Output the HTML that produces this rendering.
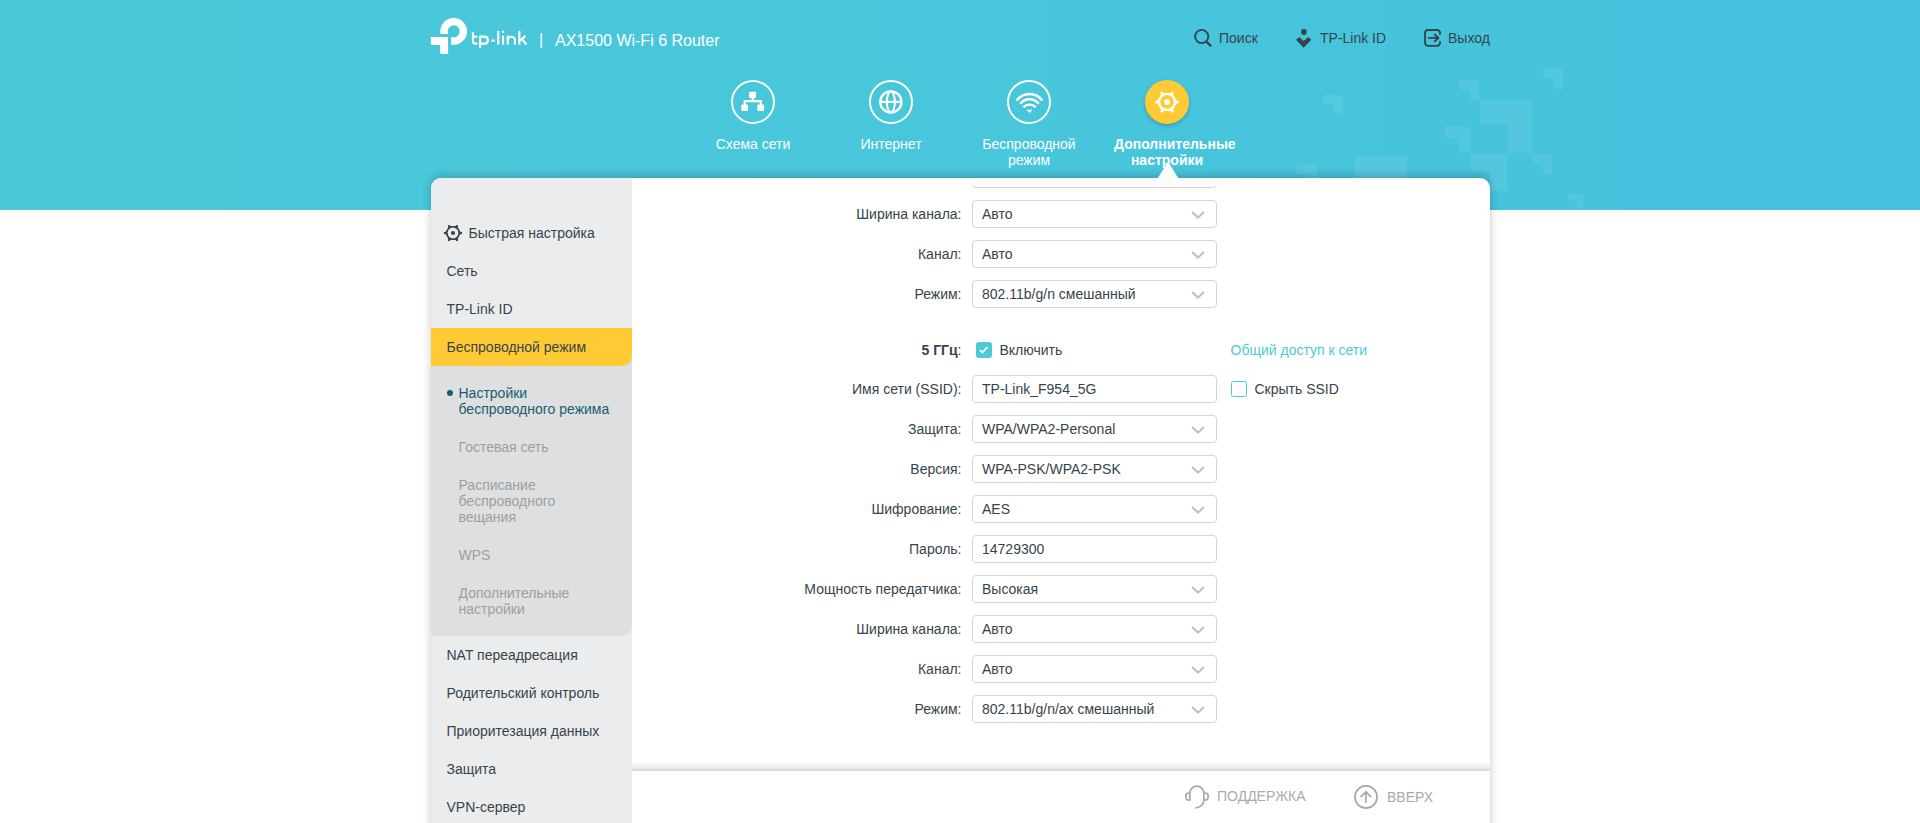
<!DOCTYPE html>
<html lang="ru">
<head>
<meta charset="utf-8">
<title>AX1500 Wi-Fi 6 Router</title>
<style>
*{box-sizing:border-box;margin:0;padding:0}
html,body{width:1920px;height:823px;overflow:hidden;background:#fff}
body{font-family:"Liberation Sans",sans-serif;font-size:14px;color:#36444b;position:relative}
.abs{position:absolute}
#hdr{position:absolute;left:0;top:0;width:1920px;height:210px;background:linear-gradient(90deg,#4ac9d8 0%,#48c6db 50%,#44c1de 100%);overflow:hidden}
.deco{position:absolute;background:rgba(255,255,255,.09)}
#title{position:absolute;left:555px;top:32px;font-size:16px;line-height:18px;color:#fff;white-space:nowrap}
#sep{position:absolute;left:539px;top:31px;font-size:16px;line-height:18px;color:#fff}
.tr{position:absolute;top:30px;line-height:16px;font-size:14px;color:#36444b;white-space:nowrap}
.nav{position:absolute;top:136px;width:138px;text-align:center;color:#fff;font-size:14px;line-height:16px}
.nav.sel{font-weight:bold}
.circ{position:absolute;top:80px;width:44px;height:44px;border-radius:50%;border:2px solid #fff}
.circ.sel{border:none;background:#ffcb34;box-shadow:0 2px 4px rgba(0,0,0,.2)}
#main{position:absolute;left:431px;top:178px;width:1059px;height:700px;background:#fff;border-radius:10px 10px 0 0;box-shadow:0 -2px 10px rgba(0,0,0,.22);overflow:hidden}
#side{position:absolute;left:0;top:0;width:201px;height:700px;background:#ebecee}
.mi{position:absolute;left:15.5px;line-height:16px;font-size:14px;color:#36444b;white-space:nowrap}
#selbar{position:absolute;left:0;top:150px;width:201px;height:38px;background:#ffcb34;border-radius:0 0 10px 0;z-index:2}
#sub{position:absolute;left:0;top:150px;width:201px;height:308px;background:#dedfe1;border-radius:0 0 10px 0}
.si{position:absolute;left:27.5px;line-height:16px;font-size:14px;color:#9b9fa2}
.si.on{color:#175e6b}
.lbl{position:absolute;right:528.5px;line-height:16px;font-size:14px;white-space:nowrap;text-align:right;color:#36444b}
.inp{position:absolute;left:541px;width:245px;height:28px;border:1px solid #d3d5d6;border-radius:4px;background:#fff;padding:5px 0 0 9px;line-height:16px;font-size:14px;color:#36444b;white-space:nowrap}
.inp svg{position:absolute;right:11px;top:10px}
#foot{position:absolute;left:201px;top:593px;width:858px;height:60px;background:#fff}
#fsh{position:absolute;left:201px;top:582px;width:858px;height:11px;background:linear-gradient(180deg,rgba(60,70,80,0) 0%,rgba(60,70,80,.04) 35%,rgba(60,70,80,.12) 75%,rgba(60,70,80,.23) 100%)}
.ft{position:absolute;line-height:16px;font-size:14px;color:#a7abae;white-space:nowrap}
.bul{position:absolute;left:16px;top:212px;width:6px;height:6px;border-radius:50%;background:#175e6b}
.txt{line-height:16px;font-size:14px;color:#36444b;white-space:nowrap}
.lnk{line-height:16px;font-size:14px;color:#4acbd6;white-space:nowrap}
.cb{position:absolute;width:16px;height:16px;border:1px solid #4acbd6;border-radius:2.5px;background:#fff}
.cb.on{background:#4acbd6}
</style>
</head>
<body>
<div id="hdr">
  <svg id="decos" class="abs" style="left:0;top:0" width="1920" height="210" viewBox="0 0 1920 210"><path fill="rgba(255,255,255,.08)" d="M1323 95H1343V115H1334V104H1323Z M1297 165H1317V185H1308V174H1297Z M1445 127H1470V152.6H1459V138.6H1445Z M1459 80H1479V99.7H1470V89H1459Z M1543 69H1563V89H1554V78H1543Z M1470 154H1507V191H1490V171H1470Z M1533 154.6H1552V174H1543V163H1533Z M1568 194H1583V208.5H1577V200.5H1568Z M1480 100H1532V153H1511Q1507.5 153 1507.5 149.5V125H1483.5Q1480 125 1480 121.5Z M1355 156H1407V208H1355Z"/></svg>
  <svg id="logo" class="abs" style="left:425px;top:12px" width="110" height="48" viewBox="0 0 110 48">
    <path fill="#fff" d="M15.55 22.05 A13.41 13.41 0 1 1 25.96 32.5 L25.96 24.71 A6.01 6.01 0 1 0 23.32 22.05 Z"/>
    <path fill="#fff" d="M5.83 25.08 H23.04 V41.88 H16.5 Q15.05 41.88 15.05 40.4 V32.95 H7.3 Q5.83 32.95 5.83 31.5 Z"/>
    <g fill="none" stroke="#fff" stroke-width="2.1">
      <path d="M47.95 20.2 V29.2 Q47.95 31.6 50.4 31.6 H52.4"/>
      <path d="M47.95 24.65 H52.4"/>
      <path d="M55.1 23.6 V36.3"/>
      <path d="M55.1 24.65 H59.6 A3.48 3.48 0 0 1 59.6 31.6 H55.1"/>
      <path d="M66.5 28.6 H70"/>
      <path d="M73.26 18.96 V32.66"/>
      <path d="M78.04 23.6 V32.66"/>
      <path d="M82.7 23.6 V32.66"/>
      <path d="M82.7 28.3 A3.62 3.62 0 0 1 89.94 28.3 V32.66"/>
      <path d="M94.37 18.96 V32.66"/>
      <path d="M94.6 28.8 L100.6 23.9"/>
      <path d="M96.9 27 L101.4 32.5"/>
    </g>
    <circle cx="78.04" cy="19.7" r="1.25" fill="#fff"/>
  </svg>
  <div id="sep">|</div>
  <div id="title">AX1500 Wi-Fi 6 Router</div>
  <svg class="abs" style="left:1188px;top:24px" width="30" height="28" viewBox="0 0 30 28">
    <circle cx="13.7" cy="12.5" r="6.6" fill="none" stroke="#36444b" stroke-width="1.9"/>
    <path d="M18.4 17.9 L23.2 22.1" stroke="#36444b" stroke-width="2.5"/>
  </svg>
  <svg class="abs" style="left:1288px;top:24px" width="30" height="28" viewBox="0 0 30 28">
    <circle cx="15.9" cy="8" r="2.9" fill="#36444b"/>
    <path d="M8 15.8 L11.3 12.9 L15.65 16.9 L20.3 12.9 L23.3 15.8 L15.65 23.7 Z" fill="#36444b"/>
  </svg>
  <svg class="abs" style="left:1418px;top:24px" width="30" height="28" viewBox="0 0 30 28">
    <path d="M22 10.7 V9 A3 3 0 0 0 19 6.05 H10.05 A3 3 0 0 0 7.05 9 V18.85 A3 3 0 0 0 10.05 21.85 H19 A3 3 0 0 0 22 18.85 V17.2" fill="none" stroke="#36444b" stroke-width="1.9"/>
    <path d="M10.2 13.9 H20 M16.3 10 L20.4 13.9 L16.3 17.7" fill="none" stroke="#36444b" stroke-width="1.9"/>
  </svg>
  <div class="tr" style="left:1219px">Поиск</div>
  <div class="tr" style="left:1320px">TP-Link ID</div>
  <div class="tr" style="left:1448px">Выход</div>
  <div class="circ sel" style="left:1145px"></div>
  <svg class="abs" style="left:729px;top:78px" width="48" height="48" viewBox="0 0 48 48">
    <circle cx="24" cy="24" r="21" fill="none" stroke="#fff" stroke-width="2"/>
    <rect x="20.1" y="13.7" width="7" height="6.4" rx="1.2" fill="#fff"/>
    <rect x="12.3" y="26.5" width="6.8" height="6.5" rx="1.2" fill="#fff"/>
    <rect x="28.3" y="26.5" width="6.8" height="6.5" rx="1.2" fill="#fff"/>
    <path d="M23.7 19 V23 M15.75 27 V23.05 H31.8 V27" fill="none" stroke="#fff" stroke-width="2.3"/>
  </svg>
  <svg class="abs" style="left:867px;top:78px" width="48" height="48" viewBox="0 0 48 48">
    <circle cx="24" cy="24" r="21" fill="none" stroke="#fff" stroke-width="2"/>
    <circle cx="23.85" cy="23.9" r="10.6" fill="none" stroke="#fff" stroke-width="2.3"/>
    <ellipse cx="23.85" cy="23.9" rx="4" ry="10.4" fill="none" stroke="#fff" stroke-width="2"/>
    <path d="M13.3 23.9 H34.4" stroke="#fff" stroke-width="2.3"/>
  </svg>
  <svg class="abs" style="left:1005px;top:78px" width="48" height="48" viewBox="0 0 48 48">
    <circle cx="24" cy="24" r="21" fill="none" stroke="#fff" stroke-width="2"/>
    <g fill="none" stroke="#fff" stroke-width="2.4">
      <path d="M11.7 22.6 A15.8 15.8 0 0 1 37.3 22.6"/>
      <path d="M15.3 25.9 A11.5 11.5 0 0 1 33.7 25.9"/>
      <path d="M18.4 29.3 A8.2 8.2 0 0 1 30.6 29.3"/>
    </g>
    <path d="M21.9 32 L23.1 31.2 L24.45 32.6 L25.8 31.2 L27.1 32 L24.45 35.1 Z" fill="#fff"/>
  </svg>
  <svg class="abs" style="left:1143px;top:78px" width="48" height="48" viewBox="0 0 48 48">
    <polygon points="34.40,23.90 29.20,32.91 18.80,32.91 13.60,23.90 18.80,14.89 29.20,14.89" fill="#fff"/><circle cx="34.40" cy="23.90" r="1.5" fill="#fff"/><circle cx="29.20" cy="32.91" r="1.5" fill="#fff"/><circle cx="18.80" cy="32.91" r="1.5" fill="#fff"/><circle cx="13.60" cy="23.90" r="1.5" fill="#fff"/><circle cx="18.80" cy="14.89" r="1.5" fill="#fff"/><circle cx="29.20" cy="14.89" r="1.5" fill="#fff"/>
    <circle cx="24" cy="23.9" r="6.8" fill="#ffcb34"/>
    <circle cx="24" cy="23.9" r="3" fill="#fff"/>
  </svg>
  <div class="nav" style="left:684px">Схема сети</div>
  <div class="nav" style="left:822px">Интернет</div>
  <div class="nav" style="left:960px">Беспроводной<br>режим</div>
  <div class="nav sel" style="left:1114px;width:106px;white-space:nowrap">Дополнительные<br>настройки</div>
</div>
<div id="main">
  <div id="side">
    <div id="sub"></div>
    <div id="selbar"></div>
    <svg class="abs" style="left:10px;top:43px" width="24" height="24" viewBox="0 0 24 24">
      <polygon points="20.06,12.00 16.03,18.98 7.97,18.98 3.94,12.00 7.97,5.02 16.03,5.02" fill="#36444b"/><circle cx="19.98" cy="12.00" r="1.2" fill="#36444b"/><circle cx="15.99" cy="18.91" r="1.2" fill="#36444b"/><circle cx="8.01" cy="18.91" r="1.2" fill="#36444b"/><circle cx="4.02" cy="12.00" r="1.2" fill="#36444b"/><circle cx="8.01" cy="5.09" r="1.2" fill="#36444b"/><circle cx="15.99" cy="5.09" r="1.2" fill="#36444b"/>
      <circle cx="12" cy="12" r="5.4" fill="#ebecee"/>
      <circle cx="12" cy="12" r="2.1" fill="#36444b"/>
    </svg>
    <div class="mi" style="left:37.5px;top:47px">Быстрая настройка</div>
    <div class="mi" style="top:85px">Сеть</div>
    <div class="mi" style="top:123px">TP-Link ID</div>
    <div class="mi" style="top:161px;z-index:3">Беспроводной режим</div>
    <div class="mi" style="top:469px">NAT переадресация</div>
    <div class="mi" style="top:507px">Родительский контроль</div>
    <div class="mi" style="top:545px">Приоритезация данных</div>
    <div class="mi" style="top:583px">Защита</div>
    <div class="mi" style="top:621px">VPN-сервер</div>
    <div class="bul"></div>
    <div class="si on" style="top:207px">Настройки<br>беспроводного режима</div>
    <div class="si" style="top:261px">Гостевая сеть</div>
    <div class="si" style="top:299px">Расписание<br>беспроводного<br>вещания</div>
    <div class="si" style="top:369px">WPS</div>
    <div class="si" style="top:407px">Дополнительные<br>настройки</div>
  </div>
  <div class="abs" style="left:541px;top:7px;width:245px;height:4px;overflow:hidden"><div class="inp" style="left:0;top:-25px"></div></div>
  <div class="lbl" style="top:28px">Ширина канала:</div><div class="inp" style="top:22px">Авто<svg width="14" height="8" viewBox="0 0 14 8"><path d="M1 1 L7 6.6 L13 1" fill="none" stroke="#bdbfc1" stroke-width="2"/></svg></div>
  <div class="lbl" style="top:68px">Канал:</div><div class="inp" style="top:62px">Авто<svg width="14" height="8" viewBox="0 0 14 8"><path d="M1 1 L7 6.6 L13 1" fill="none" stroke="#bdbfc1" stroke-width="2"/></svg></div>
  <div class="lbl" style="top:108px">Режим:</div><div class="inp" style="top:102px">802.11b/g/n смешанный<svg width="14" height="8" viewBox="0 0 14 8"><path d="M1 1 L7 6.6 L13 1" fill="none" stroke="#bdbfc1" stroke-width="2"/></svg></div>
  <div class="lbl" style="top:203px">Имя сети (SSID):</div><div class="inp" style="top:197px">TP-Link_F954_5G</div>
  <div class="lbl" style="top:243px">Защита:</div><div class="inp" style="top:237px">WPA/WPA2-Personal<svg width="14" height="8" viewBox="0 0 14 8"><path d="M1 1 L7 6.6 L13 1" fill="none" stroke="#bdbfc1" stroke-width="2"/></svg></div>
  <div class="lbl" style="top:283px">Версия:</div><div class="inp" style="top:277px">WPA-PSK/WPA2-PSK<svg width="14" height="8" viewBox="0 0 14 8"><path d="M1 1 L7 6.6 L13 1" fill="none" stroke="#bdbfc1" stroke-width="2"/></svg></div>
  <div class="lbl" style="top:323px">Шифрование:</div><div class="inp" style="top:317px">AES<svg width="14" height="8" viewBox="0 0 14 8"><path d="M1 1 L7 6.6 L13 1" fill="none" stroke="#bdbfc1" stroke-width="2"/></svg></div>
  <div class="lbl" style="top:363px">Пароль:</div><div class="inp" style="top:357px">14729300</div>
  <div class="lbl" style="top:403px">Мощность передатчика:</div><div class="inp" style="top:397px">Высокая<svg width="14" height="8" viewBox="0 0 14 8"><path d="M1 1 L7 6.6 L13 1" fill="none" stroke="#bdbfc1" stroke-width="2"/></svg></div>
  <div class="lbl" style="top:443px">Ширина канала:</div><div class="inp" style="top:437px">Авто<svg width="14" height="8" viewBox="0 0 14 8"><path d="M1 1 L7 6.6 L13 1" fill="none" stroke="#bdbfc1" stroke-width="2"/></svg></div>
  <div class="lbl" style="top:483px">Канал:</div><div class="inp" style="top:477px">Авто<svg width="14" height="8" viewBox="0 0 14 8"><path d="M1 1 L7 6.6 L13 1" fill="none" stroke="#bdbfc1" stroke-width="2"/></svg></div>
  <div class="lbl" style="top:523px">Режим:</div><div class="inp" style="top:517px">802.11b/g/n/ax смешанный<svg width="14" height="8" viewBox="0 0 14 8"><path d="M1 1 L7 6.6 L13 1" fill="none" stroke="#bdbfc1" stroke-width="2"/></svg></div>
  <div class="lbl" style="top:164px"><b>5 ГГц</b>:</div>
  <div class="cb on" style="left:545px;top:164px"><svg class="abs" style="left:-1px;top:-1px" width="16" height="16" viewBox="0 0 16 16"><path d="M4 8.1 L6.4 10.5 L11.4 5.2" fill="none" stroke="#fff" stroke-width="1.9"/></svg></div>
  <div class="abs txt" style="left:568.5px;top:164px">Включить</div>
  <div class="abs lnk" style="left:799.5px;top:164px">Общий доступ к сети</div>
  <div class="cb" style="left:800px;top:203px"></div>
  <div class="abs txt" style="left:823.5px;top:203px">Скрыть SSID</div>
  <div id="fsh"></div>
  <div id="foot">
    <svg class="abs" style="left:548px;top:9px" width="35" height="35" viewBox="0 0 35 35">
      <g fill="none" stroke="#a5a9ac" stroke-width="1.7">
        <path d="M9.87 20.8 V12.9 A6.97 6.97 0 0 1 23.8 12.9 V20.2 A8.5 7.7 0 0 1 15.3 27.9"/>
        <path d="M9.87 13 H8.5 A2.5 2.5 0 0 0 5.95 15.5 V17.5 A2.5 2.5 0 0 0 8.5 20 H9.87"/>
        <path d="M23.8 13 H25.5 A2.5 2.5 0 0 1 28.05 15.5 V17.5 A2.5 2.5 0 0 1 25.5 20 H23.8"/>
      </g>
    </svg>
    <svg class="abs" style="left:717px;top:9px" width="35" height="35" viewBox="0 0 35 35">
      <g fill="none" stroke="#a5a9ac" stroke-width="1.7">
        <circle cx="17" cy="17" r="11.05"/>
        <path d="M16.93 22.75 V11.9 M11.7 17.2 L16.93 11.7 L22.1 17.2"/>
      </g>
    </svg>
    <div class="ft" style="left:585px;top:17px">ПОДДЕРЖКА</div>
    <div class="ft" style="left:755px;top:18px">ВВЕРХ</div>
  </div>
</div>
<svg id="tri" class="abs" style="left:1156px;top:160px" width="24" height="18" viewBox="0 0 24 18"><path d="M1.8 18 L12.1 1.7 L22.2 18 Z" fill="#fff"/></svg>
</body>
</html>
